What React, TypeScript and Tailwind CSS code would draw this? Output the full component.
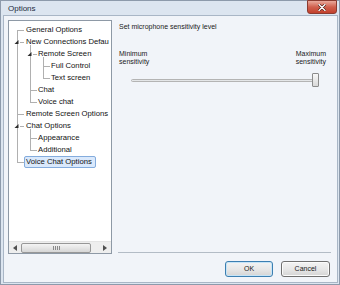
import React from "react";

type Row = { label: string; level: 0 | 1 | 2; selected?: boolean };

const rows: Row[] = [
  { label: "General Options", level: 0 },
  { label: "New Connections Defau", level: 0 },
  { label: "Remote Screen", level: 1 },
  { label: "Full Control", level: 2 },
  { label: "Text screen", level: 2 },
  { label: "Chat", level: 1 },
  { label: "Voice chat", level: 1 },
  { label: "Remote Screen Options", level: 0 },
  { label: "Chat Options", level: 0 },
  { label: "Appearance", level: 1 },
  { label: "Additional", level: 1 },
  { label: "Voice Chat Options", level: 0, selected: true },
];

const padFor = (l: number) =>
  l === 0 ? "pl-[15px]" : l === 1 ? "pl-[27px]" : "pl-[40px]";

function TreeLines() {
  const c = "#b0b0b0";
  const tri = (cx: number, cy: number) =>
    `M${cx + 2} ${cy - 2} L${cx + 2} ${cy + 2} L${cx - 2} ${cy + 2} Z`;
  return (
    <svg
      className="absolute left-0 top-0 pointer-events-none"
      width="102"
      height="160"
      viewBox="0 0 102 160"
    >
      <g stroke={c} strokeWidth="1" shapeRendering="crispEdges" fill="none">
        <line x1="8.5" y1="9" x2="8.5" y2="141.5" />
        {[9, 93, 141].map((y) => (
          <line key={y} x1="8.5" y1={y + 0.5} x2="15" y2={y + 0.5} />
        ))}
        <line x1="11" y1="21.5" x2="15" y2="21.5" />
        <line x1="11" y1="105.5" x2="15" y2="105.5" />
        <line x1="21.5" y1="24" x2="21.5" y2="81.5" />
        <line x1="21.5" y1="108" x2="21.5" y2="129.5" />
        {[69, 81, 117, 129].map((y) => (
          <line key={y} x1="21.5" y1={y + 0.5} x2="28" y2={y + 0.5} />
        ))}
        <line x1="24" y1="33.5" x2="28" y2="33.5" />
        <line x1="34.5" y1="36" x2="34.5" y2="57.5" />
        {[45, 57].map((y) => (
          <line key={y} x1="34.5" y1={y + 0.5} x2="41" y2={y + 0.5} />
        ))}
      </g>
      <g fill="#2b2b2b">
        <path d={tri(7.5, 21)} />
        <path d={tri(20.5, 33)} />
        <path d={tri(7.5, 105)} />
      </g>
    </svg>
  );
}

function HScroll() {
  return (
    <div className="h-[12px] flex items-center bg-[#eeeeee] border-t border-[#e4e4e4]">
      <div className="w-[12px] h-full flex items-center justify-center">
        <svg width="4" height="6" viewBox="0 0 4 6">
          <path d="M4 0 L0 3 L4 6 Z" fill="#505050" />
        </svg>
      </div>
      <div className="flex-1 h-full flex items-center">
        <div className="w-[70px] h-[10px] rounded-[2px] border border-[#979797] bg-gradient-to-b from-[#f4f4f4] to-[#d6d6d6] flex items-center justify-center gap-[1px]">
          <div className="w-[1px] h-[4px] bg-[#8a8a8a]" />
          <div className="w-[1px] h-[4px] bg-[#8a8a8a]" />
          <div className="w-[1px] h-[4px] bg-[#8a8a8a]" />
          <div className="w-[1px] h-[4px] bg-[#8a8a8a]" />
        </div>
      </div>
      <div className="w-[12px] h-full flex items-center justify-center">
        <svg width="4" height="6" viewBox="0 0 4 6">
          <path d="M0 0 L4 3 L0 6 Z" fill="#505050" />
        </svg>
      </div>
    </div>
  );
}

function Button({ label, primary }: { label: string; primary?: boolean }) {
  return (
    <div
      className={
        "h-[16px] rounded-[3px] border flex items-center justify-center text-[7px] text-[#1a1a1a] bg-gradient-to-b from-[#f3f3f3] via-[#e8e8e8] to-[#d4d4d4] " +
        (primary
          ? "w-[48px] border-[#3c7fb1] shadow-[inset_0_0_0_1px_#c6e4f7]"
          : "w-[49px] border-[#707070] shadow-[inset_0_0_0_1px_#fbfbfb]")
      }
    >
      {label}
    </div>
  );
}

export default function App() {
  return (
    <div
      className="relative w-[340px] h-[285px] bg-[#dce5f0] border border-[#8d9aab] flex flex-col"
      style={{ fontFamily: '"Liberation Sans", Arial, sans-serif' }}
    >
      <div className="h-[14px] pl-[7px] pt-[2px] flex items-center text-[8px] text-[#1b2a3d]">
        Options
      </div>
      <div className="absolute top-[-1px] right-[2px] w-[30px] h-[14px] rounded-b-[3px] border border-[#8b3b30] bg-gradient-to-b from-[#e9a99c] via-[#d0604e] to-[#c3402c] flex items-center justify-center">
        <svg width="8" height="7" viewBox="0 0 8 7">
          <path
            d="M1 0.5 L7 6.5 M7 0.5 L1 6.5"
            stroke="#4a1a12"
            strokeWidth="2.6"
            strokeLinecap="round"
          />
          <path
            d="M1 0.5 L7 6.5 M7 0.5 L1 6.5"
            stroke="#ffffff"
            strokeWidth="1.4"
            strokeLinecap="round"
          />
        </svg>
      </div>

      <div className="flex-1 ml-[2px] mr-[1px] mb-[1px] border border-[#a9b6c6] bg-[#f1f4f9] flex flex-col pl-[4px] pt-[4px] pr-[6px]">
        <div className="flex items-start">
          <div className="w-[104px] h-[234px] border border-[#8e99a6] bg-white flex flex-col">
            <div className="relative flex-1 pt-[3px] overflow-hidden">
              <TreeLines />
              {rows.map((r) => (
                <div
                  key={r.label}
                  className={
                    "relative h-[12px] flex items-center whitespace-nowrap text-[7.7px] text-[#111111] " +
                    padFor(r.level)
                  }
                >
                  <span
                    className={
                      "px-[1px] h-[12px] leading-[10px] border rounded-[2px] " +
                      (r.selected
                        ? "border-[#84acdd] bg-[#dae9fc] pr-[3px]"
                        : "border-transparent")
                    }
                  >
                    {r.label}
                  </span>
                </div>
              ))}
            </div>
            <HScroll />
          </div>

          <div className="flex-1 ml-[6px] h-[233px] border-b border-[#b3bcc6] pl-[1px] pr-[5px] pt-[3px] flex flex-col text-[7px] text-[#1a1a1a]">
            <div className="leading-[8px]">Set microphone sensitivity level</div>
            <div className="mt-[19px] flex justify-between leading-[8px]">
              <div>
                Minimum
                <br />
                sensitivity
              </div>
              <div className="text-center">
                Maximum
                <br />
                sensitivity
              </div>
            </div>
            <div className="relative mt-[7px] ml-[12px] mr-[7px] h-[14px] flex items-center">
              <div className="w-full h-[3px] rounded-[2px] border border-[#b4b4b4] bg-[#e4e6e8]" />
              <div className="absolute right-0 top-0 w-[7px] h-[14px] rounded-[1px] border border-[#8c8c8c] bg-gradient-to-b from-[#f8f8f8] to-[#d9d9d9]" />
            </div>
          </div>
        </div>

        <div className="mt-[7px] pr-[1px] flex justify-end gap-[8px]">
          <Button label="OK" primary />
          <Button label="Cancel" />
        </div>
      </div>
    </div>
  );
}
